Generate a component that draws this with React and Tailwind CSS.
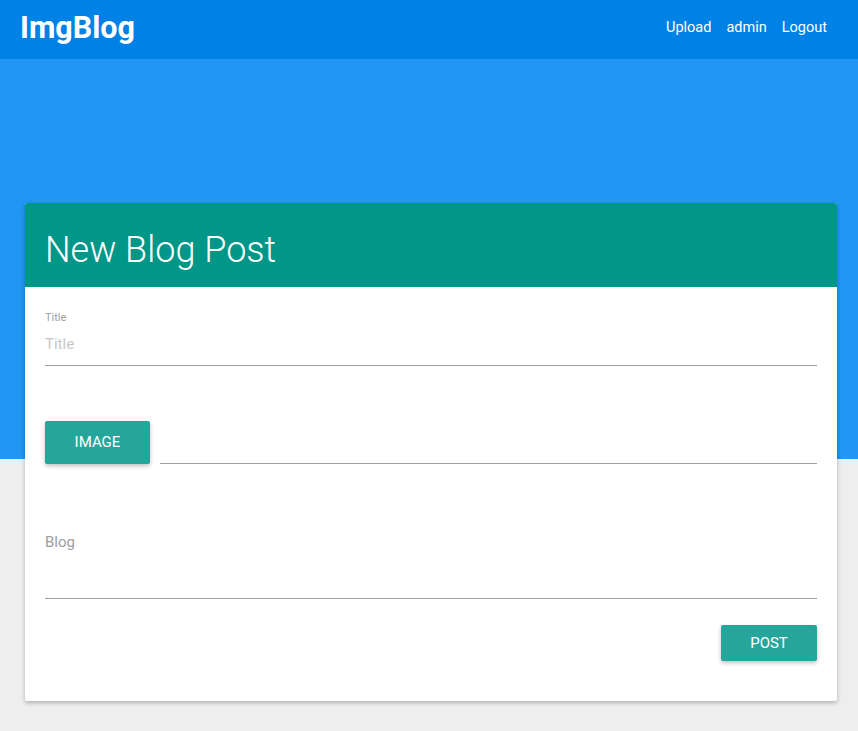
import React from "react";

const App = () => {
  return (
    <div className="min-h-[731px] bg-[#eeeeee] font-['Roboto',sans-serif]">
      {/* Navbar */}
      <nav className="h-[59px] bg-[#0081e6] flex items-center justify-between pl-[20px] pr-[31px] pb-[3px] text-white">
        <span className="text-[30.5px] font-bold leading-none">ImgBlog</span>
        <div className="flex items-center gap-[15px] text-[14.5px]">
          <a>Upload</a>
          <a>admin</a>
          <a>Logout</a>
        </div>
      </nav>

      {/* Hero */}
      <div className="h-[400px] bg-[#2196f3]" />

      {/* Card */}
      <div className="pl-[25px] pr-[21px] pb-[30px] -mt-[256px]">
        <div className="bg-white rounded-[2px] shadow-[0_2px_4px_rgba(0,0,0,0.25)] overflow-hidden">
          <div className="h-[84px] bg-[#009688] flex items-center px-[20px] pt-[9px]">
            <h1 className="text-[36px] font-light text-white leading-none">
              New Blog Post
            </h1>
          </div>
          <div className="px-[20px] pt-[24px] pb-[40px]">
            {/* Title input */}
            <div className="flex flex-col">
              <label className="text-[11px] text-[#9e9e9e] leading-[13px]">Title</label>
              <input
                type="text"
                placeholder="Title"
                className="mt-[10px] h-[32px] pb-[11px] text-[15px] border-b border-[#9e9e9e] outline-none placeholder:text-[#c8c8c8]"
              />
            </div>

            {/* Image file input */}
            <div className="flex items-end gap-[10px] mt-[55px]">
              <button className="w-[105px] h-[43px] bg-[#26a69a] text-white text-[15px] rounded-[2px] shadow-[0_2px_4px_rgba(0,0,0,0.25)] uppercase">
                Image
              </button>
              <div className="flex-1 border-b border-[#9e9e9e]" />
            </div>

            {/* Blog textarea */}
            <div className="mt-[70px] flex flex-col">
              <label className="text-[15px] text-[#9e9e9e] leading-[17px]">Blog</label>
              <div className="h-[48px] border-b border-[#9e9e9e]" />
            </div>

            {/* Submit */}
            <div className="flex justify-end mt-[26px]">
              <button className="w-[96px] h-[36px] bg-[#26a69a] text-white text-[15px] rounded-[2px] shadow-[0_2px_4px_rgba(0,0,0,0.25)] uppercase">
                Post
              </button>
            </div>
          </div>
        </div>
      </div>
    </div>
  );
};

export default App;
